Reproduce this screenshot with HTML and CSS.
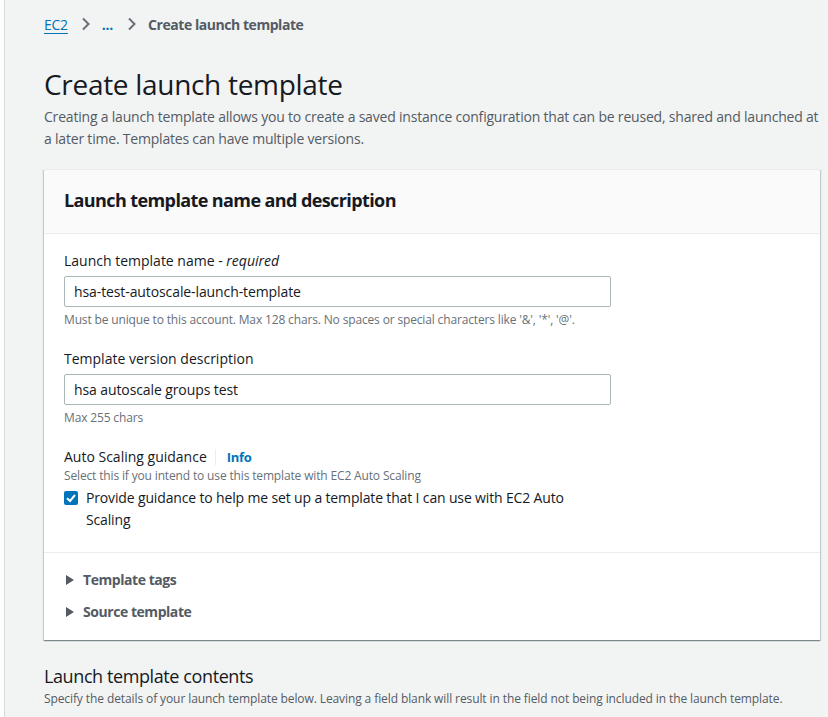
FILE: index.html
```html
<!DOCTYPE html>
<html lang="en">
<head>
  <meta charset="UTF-8">
  <meta name="viewport" content="width=device-width, initial-scale=1.0">
  <title>Create launch template | EC2</title>
  <link rel="stylesheet" href="styles.css">
</head>
<body>
  <div class="page">
    <nav class="breadcrumbs">
      <a href="#" class="crumb-link">EC2</a>
      <span class="chevron">
        <svg width="12" height="16" viewBox="0 0 12 16"><path d="M3 2.5 L8.5 8 L3 13.5" fill="none" stroke="#687078" stroke-width="2"/></svg>
      </span>
      <a href="#" class="crumb-more">...</a>
      <span class="chevron">
        <svg width="12" height="16" viewBox="0 0 12 16"><path d="M3 2.5 L8.5 8 L3 13.5" fill="none" stroke="#687078" stroke-width="2"/></svg>
      </span>
      <span class="crumb-current">Create launch template</span>
    </nav>

    <h1>Create launch template</h1>
    <p class="lead">
      Creating a launch template allows you to create a saved instance configuration that can be reused, shared and launched at a later time. Templates can have multiple versions.
    </p>

    <section class="card">
      <div class="card-header">
        <h2>Launch template name and description</h2>
      </div>
      <div class="card-body">
        <div class="field">
          <label class="field-label" for="ltName">Launch template name - <em>required</em></label>
          <input type="text" id="ltName" value="hsa-test-autoscale-launch-template">
          <div class="hint">Must be unique to this account. Max 128 chars. No spaces or special characters like '&amp;', '*', '@'.</div>
        </div>
        <div class="field">
          <label class="field-label" for="ltDesc">Template version description</label>
          <input type="text" id="ltDesc" value="hsa autoscale groups test">
          <div class="hint">Max 255 chars</div>
        </div>
        <div class="field">
          <div class="label-row">
            <span class="field-label">Auto Scaling guidance</span>
            <a href="#" class="info">Info</a>
          </div>
          <div class="hint tight">Select this if you intend to use this template with EC2 Auto Scaling</div>
          <label class="check">
            <span class="box">
              <svg width="14" height="14" viewBox="0 0 14 14"><path d="M3 7.2 L6 10 L11 4" fill="none" stroke="#fff" stroke-width="2"/></svg>
            </span>
            <span class="check-text">Provide guidance to help me set up a template that I can use with EC2 Auto Scaling</span>
          </label>
        </div>
      </div>
      <div class="card-footer">
        <div class="expander"><span class="caret"></span>Template tags</div>
        <div class="expander"><span class="caret"></span>Source template</div>
      </div>
    </section>

    <h3>Launch template contents</h3>
    <p class="sub">Specify the details of your launch template below. Leaving a field blank will result in the field not being included in the launch template.</p>
  </div>
</body>
</html>
```

FILE: styles.css
```css
body {
  margin: 0;
  background: #fff;
  font-family: "Open Sans", "Noto Sans", sans-serif;
  color: #16191f;
  letter-spacing: -0.25px;
}
.page {
  margin-left: 4px;
  border-left: 1px solid #d5dbdb;
  background: #f2f3f3;
  padding: 12px 8px 20px 39px;
  min-height: 717px;
  box-sizing: border-box;
}
.breadcrumbs {
  display: flex;
  align-items: center;
  gap: 9px;
  font-size: 14px;
  height: 24px;
}
.crumb-link {
  color: #0073bb;
  text-decoration: underline;
  text-underline-offset: 3px;
  margin-right: 3px;
}
.crumb-more {
  color: #0073bb;
  text-decoration: none;
  font-weight: bold;
  margin: 0 4px 0 1px;
}
.chevron { display: flex; }
.crumb-current {
  color: #545b64;
  font-weight: bold;
  letter-spacing: -0.45px;
  margin-left: 1px;
}
h1 {
  font-size: 28px;
  font-weight: normal;
  margin: 28px 0 0;
  line-height: 40px;
  letter-spacing: -0.3px;
}
.lead {
  margin: 2px 0 0;
  font-size: 14px;
  line-height: 22px;
  color: #545b64;
  letter-spacing: -0.2px;
}
.card {
  margin-top: 19px;
  background: #fff;
  border-top: 1px solid #eaeded;
  box-shadow: 0 1px 1px 0 rgba(0,28,36,0.3), 1px 1px 1px 0 rgba(0,28,36,0.15), -1px 1px 1px 0 rgba(0,28,36,0.15);
}
.card-header {
  background: #fafafa;
  border-bottom: 1px solid #eaeded;
  padding: 16px 20px 19px;
}
.card-header h2 {
  margin: 0;
  font-size: 18px;
  line-height: 28px;
  font-weight: bold;
  letter-spacing: -0.6px;
}
.card-body {
  padding: 16px 20px 21px;
  border-bottom: 1px solid #eaeded;
}
.field { margin-bottom: 19px; }
.field:last-child { margin-bottom: 0; }
.field-label {
  display: block;
  font-size: 14px;
  line-height: 22px;
  letter-spacing: 0;
}
.field input {
  display: block;
  width: 547px;
  height: 31px;
  box-sizing: border-box;
  margin-top: 4px;
  padding: 4px 9px;
  border: 1px solid #aab7b8;
  border-radius: 2px;
  font-family: inherit;
  font-size: 14px;
  letter-spacing: -0.1px;
  color: #16191f;
}
.hint {
  font-size: 12px;
  line-height: 18px;
  color: #687078;
  margin-top: 4px;
  letter-spacing: -0.15px;
}
.hint.tight { margin-top: -1px; }
.label-row {
  display: flex;
  align-items: center;
}
.info {
  margin-left: 8px;
  padding-left: 11px;
  border-left: 1px solid #eaeded;
  color: #0073bb;
  font-size: 13px;
  font-weight: bold;
  text-decoration: none;
  line-height: 16px;
  letter-spacing: -0.3px;
}
.check {
  display: flex;
  gap: 8px;
  font-size: 14px;
  line-height: 22px;
  margin-top: 2px;
  letter-spacing: -0.15px;
}
.check-text { width: 490px; }
.box {
  flex: none;
  width: 14px;
  height: 14px;
  margin-top: 4px;
  background: #0073bb;
  border-radius: 2px;
  display: flex;
}
.card-footer { padding: 16px 20px 17px; }
.expander {
  display: flex;
  align-items: center;
  font-size: 14px;
  font-weight: bold;
  color: #545b64;
  line-height: 22px;
  margin-bottom: 10px;
  letter-spacing: -0.45px;
}
.expander:last-child { margin-bottom: 0; }
.caret {
  width: 0;
  height: 0;
  border-top: 5px solid transparent;
  border-bottom: 5px solid transparent;
  border-left: 8px solid #545b64;
  margin: 0 9px 0 2px;
}
h3 {
  margin: 22px 0 0;
  font-size: 18px;
  font-weight: normal;
  line-height: 28px;
  letter-spacing: -0.4px;
}
.sub {
  margin: 0;
  font-size: 12px;
  line-height: 18px;
  color: #545b64;
  letter-spacing: -0.1px;
}
```
